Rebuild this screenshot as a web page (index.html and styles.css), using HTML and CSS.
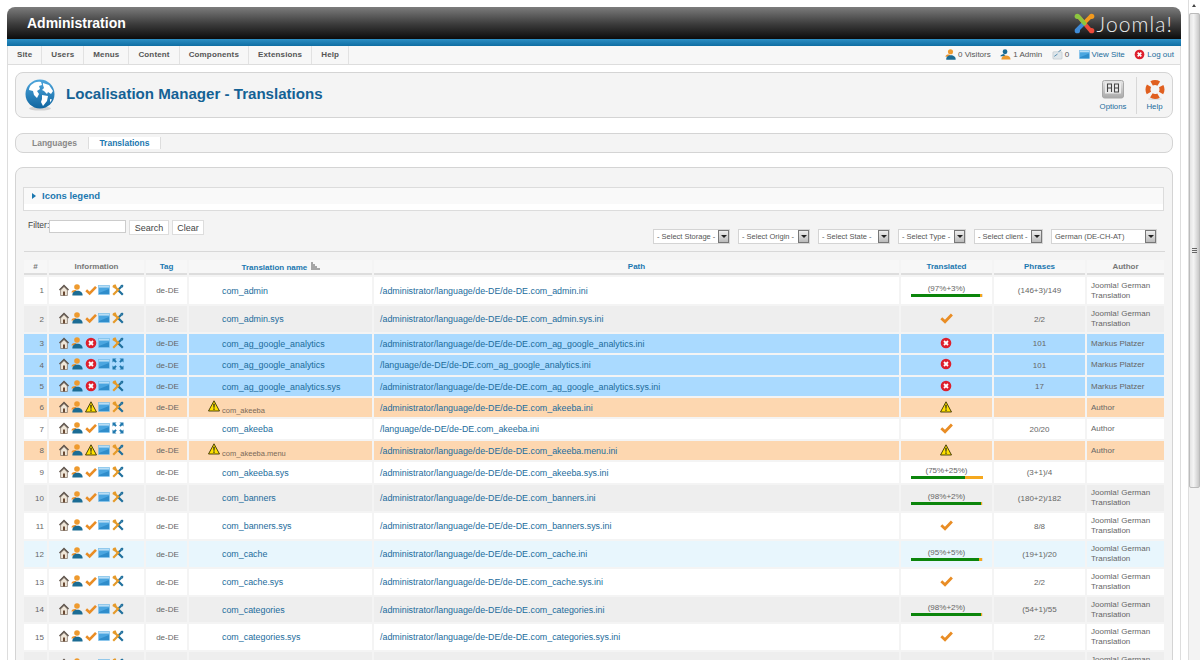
FILE: index.html
```html
<!DOCTYPE html>
<html lang="en">
<head>
<meta charset="utf-8">
<title>Localisation Manager - Translations</title>
<link rel="stylesheet" href="styles.css">
</head>
<body>
<svg class="defs" width="0" height="0" aria-hidden="true">
  <defs>
    <linearGradient id="g-globe" x1="0" y1="0" x2="0" y2="1"><stop offset="0" stop-color="#4ea6dd"/><stop offset="1" stop-color="#0f659f"/></linearGradient>
    <linearGradient id="g-opt" x1="0" y1="0" x2="0" y2="1"><stop offset="0" stop-color="#e6e6e6"/><stop offset="1" stop-color="#a9a9a9"/></linearGradient>
    <symbol id="i-house" viewBox="0 0 12 12">
      <path d="M2.600 6 6 2.600 9.400 6v5.500H2.600z" fill="#efe6d8" stroke="#7a6c5e" stroke-width=".7"/>
      <path d="M6 .6 1 5.600l.9.800L6 2.500l4.100 3.900.9-.8z" fill="#5c5148"/>
      <path d="M5 7.400h2v4.100H5z" fill="#6a4a34"/>
    </symbol>
    <symbol id="i-person" viewBox="0 0 12 12">
      <path d="M.4 8.400C.8 6.400 3 5.800 5 6.200l1 2.300z" fill="#e8902c"/>
      <circle cx="6" cy="3" r="2.800" fill="#ee9a2e"/>
      <path d="M1.400 11.600c-.4-3 2-4.800 5-4.800s5.500 1.800 5.200 4.800z" fill="#1b6c94"/>
    </symbol>
    <symbol id="i-admin" viewBox="0 0 12 12">
      <circle cx="5.500" cy="3" r="2.600" fill="#1b6c94"/>
      <path d="M.5 8c0-1.500 2-2.500 4-2.500L6 8z" fill="#1b6c94"/>
      <path d="M1.500 11.500c0-3 2-4.500 5-4.500s5 1.500 5 4.500z" fill="#ee9a2e"/>
    </symbol>
    <symbol id="i-check" viewBox="0 0 13 12">
      <path d="M1.300 6.300 5 9.800 11.900 2.500" fill="none" stroke="#e98d25" stroke-width="2.800"/>
    </symbol>
    <symbol id="i-window" viewBox="0 0 12 12">
      <rect x=".5" y="1.500" width="11" height="9" fill="#4ba6e0" stroke="#7dbfe9" stroke-width=".6"/>
      <path d="M.8 1.800h10.400v1.800H.8z" fill="#b9def5"/>
      <path d="M1 9 11 5v5H1z" fill="#2f8dcb"/>
    </symbol>
    <symbol id="i-tools" viewBox="0 0 12 12">
      <path d="M5.500 5.500 10.800 10.800" stroke="#1f6f9c" stroke-width="2.200"/>
      <path d="M5.800 5.800 3 3" stroke="#e59a2a" stroke-width="2.200"/>
      <path d="M.6 3.200C.3 1.400 1.800.2 3.800.6L4.600 3 3 4.500z" fill="#e59a2a"/>
      <path d="M1.200 10.800 7.500 4.500" stroke="#e59a2a" stroke-width="2.200"/>
      <path d="M7 5 9.500 2.500" stroke="#1f6f9c" stroke-width="2"/>
      <path d="M8.300 1.500 10.200.5 11.500 1.800 10.500 3.700z" fill="#1f6f9c"/>
    </symbol>
    <symbol id="i-expand" viewBox="0 0 12 12">
      <g fill="#1f78ae">
        <path d="M.5.500h4L3.200 1.800 4.800 3.400 3.400 4.800 1.800 3.200.5 4.500z"/>
        <path d="M11.500.500h-4l1.300 1.300L7.200 3.400l1.400 1.400 1.600-1.600 1.300 1.300z"/>
        <path d="M.5 11.500h4l-1.300-1.300 1.600-1.600-1.400-1.400-1.600 1.600L.5 7.500z"/>
        <path d="M11.500 11.500h-4l1.300-1.300-1.600-1.600 1.400-1.400 1.600 1.600 1.300-1.300z"/>
      </g>
    </symbol>
    <symbol id="i-error" viewBox="0 0 12 12">
      <circle cx="6" cy="6" r="5.300" fill="#dd1f2c"/>
      <path d="M4 4l4 4M8 4 4 8" stroke="#fff" stroke-width="1.800"/>
    </symbol>
    <symbol id="i-warn" viewBox="0 0 12 12">
      <path d="M6 .8 11.500 11H.5z" fill="#ffe100" stroke="#3a3300" stroke-width=".9" stroke-linejoin="round"/>
      <path d="M5.300 3.800h1.400l-.2 4h-1zM5.300 8.500h1.400v1.300H5.300z" fill="#222"/>
    </symbol>
  </defs>
</svg>

<div class="window">
  <div class="page">
    <header class="head">
      <span class="head-title">Administration</span>
      <span class="logo">
        <svg class="logo-mark" viewBox="0 0 22 22">
          <path d="M5 4 17 18" stroke="#ef4b3a" stroke-width="4.200" stroke-linecap="round"/>
          <path d="M4 17 10 11" stroke="#3f8bd6" stroke-width="4.200" stroke-linecap="round"/>
          <path d="M17 4 11 10" stroke="#f39a1d" stroke-width="4.200" stroke-linecap="round"/>
          <path d="M5 4 11 11" stroke="#8dc63f" stroke-width="4.200" stroke-linecap="round"/>
          <circle cx="3.500" cy="3.500" r="2.800" fill="#8dc63f"/>
          <circle cx="18.500" cy="3.500" r="2.800" fill="#f39a1d"/>
          <circle cx="3.500" cy="18.500" r="2.800" fill="#3f8bd6"/>
          <circle cx="18.500" cy="18.500" r="2.800" fill="#ef4b3a"/>
        </svg>
        <span class="logo-text">Joomla!</span>
      </span>
    </header>
    <div class="blue-bar"></div>
    <nav class="menu">
      <ul class="menu-list">
        <li class="menu-item">Site</li>
        <li class="menu-item">Users</li>
        <li class="menu-item">Menus</li>
        <li class="menu-item">Content</li>
        <li class="menu-item">Components</li>
        <li class="menu-item">Extensions</li>
        <li class="menu-item">Help</li>
      </ul>
      <div class="status">
        <span class="stat"><svg class="ic11"><use href="#i-person"/></svg>0 Visitors</span>
        <span class="stat"><svg class="ic11"><use href="#i-admin"/></svg>1 Admin</span>
        <span class="stat"><svg class="ic11" viewBox="0 0 12 12"><rect x="1" y="3" width="10" height="8" rx="1" fill="#dfe6ea" stroke="#b5bfc5" stroke-width=".6"/><path d="M2.500 8 6 5.500M7 3l3-2" stroke="#4a87ad" stroke-width="1"/></svg>0</span>
        <a class="stat stat-link"><svg class="ic11"><use href="#i-window"/></svg>View Site</a>
        <a class="stat stat-link"><svg class="ic11"><use href="#i-error"/></svg>Log out</a>
      </div>
    </nav>

    <main class="content">
      <section class="title-panel">
        <svg class="globe" viewBox="0 0 30 32">
          <ellipse cx="15" cy="29.500" rx="11" ry="2" fill="#d2d2d2"/>
          <circle cx="15" cy="15" r="14.500" fill="url(#g-globe)"/>
          <path d="M6 6c3-3 7-4 10-3l1 3-3 1 1 3-3 2 2 3-2 4-3-3-1-4-4-1c0-2 1-4 2-5z" fill="#fff"/>
          <path d="M18 4l6 2 4 6-2 3-3-2-1 2-3-3-2-1 2-2-1-3z" fill="#fff"/>
          <path d="M17 16l6 1-1 5-4 5-2-4 1-3z" fill="#fff"/>
          <path d="M25 20l2 .5-2 3z" fill="#fff"/>
        </svg>
        <h1 class="page-title">Localisation Manager - Translations</h1>
        <div class="toolbar">
          <a class="tool tool-options">
            <svg class="tool-icon" viewBox="0 0 22 20">
              <rect x=".5" y=".5" width="21" height="17.500" rx="2" fill="url(#g-opt)" stroke="#a8a8a8"/>
              <rect x="3" y="2.500" width="16" height="11" fill="#ececec"/>
              <path d="M5.500 12V4h4v8M5.500 8h4M12.500 4h4v8h-4zM12.500 8h4" fill="none" stroke="#444" stroke-width="1.100"/>
            </svg>
            <span>Options</span>
          </a>
          <a class="tool tool-help">
            <svg class="tool-icon" viewBox="0 0 22 20">
              <ellipse cx="11" cy="19" rx="7" ry="1" fill="#ddd"/>
              <circle cx="11" cy="9.500" r="7" fill="none" stroke="#e05f1f" stroke-width="5" stroke-dasharray="7.500 3.500" stroke-dashoffset="3.750"/>
            </svg>
            <span>Help</span>
          </a>
        </div>
      </section>

      <nav class="tabs">
        <a class="tab">Languages</a>
        <a class="tab tab-active">Translations</a>
      </nav>

      <section class="main-panel">
        <div class="legend">
          <span class="legend-arrow"></span>
          <span class="legend-title">Icons legend</span>
        </div>

        <div class="filters">
          <div class="filter-left">
            <label class="filter-label">Filter:</label>
            <span class="filter-input"></span>
            <button class="btn" type="button">Search</button>
            <button class="btn" type="button">Clear</button>
          </div>
          <div class="filter-right">
            <span class="sel sel-storage"><span class="sel-text">- Select Storage -</span><span class="sel-btn"></span></span>
            <span class="sel sel-origin"><span class="sel-text">- Select Origin -</span><span class="sel-btn"></span></span>
            <span class="sel sel-state"><span class="sel-text">- Select State -</span><span class="sel-btn"></span></span>
            <span class="sel sel-type"><span class="sel-text">- Select Type -</span><span class="sel-btn"></span></span>
            <span class="sel sel-client"><span class="sel-text">- Select client -</span><span class="sel-btn"></span></span>
            <span class="sel sel-lang"><span class="sel-text">German (DE-CH-AT)</span><span class="sel-btn"></span></span>
          </div>
        </div>

        <table class="grid">
          <colgroup>
            <col class="c-num"><col class="c-info"><col class="c-tag"><col class="c-name"><col class="c-path"><col class="c-trans"><col class="c-phr"><col class="c-auth">
          </colgroup>
          <thead>
            <tr>
              <th class="th-plain">#</th>
              <th class="th-plain">Information</th>
              <th>Tag</th>
              <th>Translation name
                <svg class="sort" viewBox="0 0 9 8"><path d="M0 1h2M0 3h4M0 5h6M0 7h9" stroke="#555" stroke-width="1"/></svg>
              </th>
              <th>Path</th>
              <th>Translated</th>
              <th>Phrases</th>
              <th class="th-plain">Author</th>
            </tr>
          </thead>
          <tbody>
            <tr class="h27 r-white">
              <td class="num">1</td>
              <td class="info"><svg class="ic"><use href="#i-house"/></svg><svg class="ic"><use href="#i-person"/></svg><svg class="ic"><use href="#i-check"/></svg><svg class="ic"><use href="#i-window"/></svg><svg class="ic"><use href="#i-tools"/></svg></td>
              <td class="tag">de-DE</td>
              <td class="name">com_admin</td>
              <td class="path">/administrator/language/de-DE/de-DE.com_admin.ini</td>
              <td class="trans"><div class="pct">(97%+3%)</div><div class="bar"><span class="bar-g" style="width:97%"></span><span class="bar-o" style="width:3%"></span></div></td>
              <td class="phr">(146+3)/149</td>
              <td class="auth">Joomla! German Translation</td>
            </tr>
            <tr class="h26 r-grey">
              <td class="num">2</td>
              <td class="info"><svg class="ic"><use href="#i-house"/></svg><svg class="ic"><use href="#i-person"/></svg><svg class="ic"><use href="#i-check"/></svg><svg class="ic"><use href="#i-window"/></svg><svg class="ic"><use href="#i-tools"/></svg></td>
              <td class="tag">de-DE</td>
              <td class="name">com_admin.sys</td>
              <td class="path">/administrator/language/de-DE/de-DE.com_admin.sys.ini</td>
              <td class="trans"><svg class="ic-big"><use href="#i-check"/></svg></td>
              <td class="phr">2/2</td>
              <td class="auth">Joomla! German Translation</td>
            </tr>
            <tr class="h19 r-blue">
              <td class="num">3</td>
              <td class="info"><svg class="ic"><use href="#i-house"/></svg><svg class="ic"><use href="#i-person"/></svg><svg class="ic"><use href="#i-error"/></svg><svg class="ic"><use href="#i-window"/></svg><svg class="ic"><use href="#i-tools"/></svg></td>
              <td class="tag">de-DE</td>
              <td class="name">com_ag_google_analytics</td>
              <td class="path">/administrator/language/de-DE/de-DE.com_ag_google_analytics.ini</td>
              <td class="trans"><svg class="ic"><use href="#i-error"/></svg></td>
              <td class="phr">101</td>
              <td class="auth">Markus Platzer</td>
            </tr>
            <tr class="h20 r-blue">
              <td class="num">4</td>
              <td class="info"><svg class="ic"><use href="#i-house"/></svg><svg class="ic"><use href="#i-person"/></svg><svg class="ic"><use href="#i-error"/></svg><svg class="ic"><use href="#i-window"/></svg><svg class="ic"><use href="#i-expand"/></svg></td>
              <td class="tag">de-DE</td>
              <td class="name">com_ag_google_analytics</td>
              <td class="path">/language/de-DE/de-DE.com_ag_google_analytics.ini</td>
              <td class="trans"><svg class="ic"><use href="#i-error"/></svg></td>
              <td class="phr">101</td>
              <td class="auth">Markus Platzer</td>
            </tr>
            <tr class="h19 r-blue">
              <td class="num">5</td>
              <td class="info"><svg class="ic"><use href="#i-house"/></svg><svg class="ic"><use href="#i-person"/></svg><svg class="ic"><use href="#i-error"/></svg><svg class="ic"><use href="#i-window"/></svg><svg class="ic"><use href="#i-tools"/></svg></td>
              <td class="tag">de-DE</td>
              <td class="name">com_ag_google_analytics.sys</td>
              <td class="path">/administrator/language/de-DE/de-DE.com_ag_google_analytics.sys.ini</td>
              <td class="trans"><svg class="ic"><use href="#i-error"/></svg></td>
              <td class="phr">17</td>
              <td class="auth">Markus Platzer</td>
            </tr>
            <tr class="h19 r-orange">
              <td class="num">6</td>
              <td class="info"><svg class="ic"><use href="#i-house"/></svg><svg class="ic"><use href="#i-person"/></svg><svg class="ic"><use href="#i-warn"/></svg><svg class="ic"><use href="#i-window"/></svg><svg class="ic"><use href="#i-tools"/></svg></td>
              <td class="tag">de-DE</td>
              <td class="name name-warn"><svg class="ic-warn"><use href="#i-warn"/></svg>com_akeeba</td>
              <td class="path">/administrator/language/de-DE/de-DE.com_akeeba.ini</td>
              <td class="trans"><svg class="ic"><use href="#i-warn"/></svg></td>
              <td class="phr"></td>
              <td class="auth">Author</td>
            </tr>
            <tr class="h20 r-white">
              <td class="num">7</td>
              <td class="info"><svg class="ic"><use href="#i-house"/></svg><svg class="ic"><use href="#i-person"/></svg><svg class="ic"><use href="#i-check"/></svg><svg class="ic"><use href="#i-window"/></svg><svg class="ic"><use href="#i-expand"/></svg></td>
              <td class="tag">de-DE</td>
              <td class="name">com_akeeba</td>
              <td class="path">/language/de-DE/de-DE.com_akeeba.ini</td>
              <td class="trans"><svg class="ic-big"><use href="#i-check"/></svg></td>
              <td class="phr">20/20</td>
              <td class="auth">Author</td>
            </tr>
            <tr class="h19 r-orange">
              <td class="num">8</td>
              <td class="info"><svg class="ic"><use href="#i-house"/></svg><svg class="ic"><use href="#i-person"/></svg><svg class="ic"><use href="#i-warn"/></svg><svg class="ic"><use href="#i-window"/></svg><svg class="ic"><use href="#i-tools"/></svg></td>
              <td class="tag">de-DE</td>
              <td class="name name-warn"><svg class="ic-warn"><use href="#i-warn"/></svg>com_akeeba.menu</td>
              <td class="path">/administrator/language/de-DE/de-DE.com_akeeba.menu.ini</td>
              <td class="trans"><svg class="ic"><use href="#i-warn"/></svg></td>
              <td class="phr"></td>
              <td class="auth">Author</td>
            </tr>
            <tr class="h21 r-white">
              <td class="num">9</td>
              <td class="info"><svg class="ic"><use href="#i-house"/></svg><svg class="ic"><use href="#i-person"/></svg><svg class="ic"><use href="#i-check"/></svg><svg class="ic"><use href="#i-window"/></svg><svg class="ic"><use href="#i-tools"/></svg></td>
              <td class="tag">de-DE</td>
              <td class="name">com_akeeba.sys</td>
              <td class="path">/administrator/language/de-DE/de-DE.com_akeeba.sys.ini</td>
              <td class="trans"><div class="pct">(75%+25%)</div><div class="bar"><span class="bar-g" style="width:75%"></span><span class="bar-o" style="width:25%"></span></div></td>
              <td class="phr">(3+1)/4</td>
              <td class="auth"></td>
            </tr>
            <tr class="h26 r-grey">
              <td class="num">10</td>
              <td class="info"><svg class="ic"><use href="#i-house"/></svg><svg class="ic"><use href="#i-person"/></svg><svg class="ic"><use href="#i-check"/></svg><svg class="ic"><use href="#i-window"/></svg><svg class="ic"><use href="#i-tools"/></svg></td>
              <td class="tag">de-DE</td>
              <td class="name">com_banners</td>
              <td class="path">/administrator/language/de-DE/de-DE.com_banners.ini</td>
              <td class="trans"><div class="pct">(98%+2%)</div><div class="bar"><span class="bar-g" style="width:98%"></span><span class="bar-o" style="width:2%"></span></div></td>
              <td class="phr">(180+2)/182</td>
              <td class="auth">Joomla! German Translation</td>
            </tr>
            <tr class="h26 r-white">
              <td class="num">11</td>
              <td class="info"><svg class="ic"><use href="#i-house"/></svg><svg class="ic"><use href="#i-person"/></svg><svg class="ic"><use href="#i-check"/></svg><svg class="ic"><use href="#i-window"/></svg><svg class="ic"><use href="#i-tools"/></svg></td>
              <td class="tag">de-DE</td>
              <td class="name">com_banners.sys</td>
              <td class="path">/administrator/language/de-DE/de-DE.com_banners.sys.ini</td>
              <td class="trans"><svg class="ic-big"><use href="#i-check"/></svg></td>
              <td class="phr">8/8</td>
              <td class="auth">Joomla! German Translation</td>
            </tr>
            <tr class="h26 r-hover">
              <td class="num">12</td>
              <td class="info"><svg class="ic"><use href="#i-house"/></svg><svg class="ic"><use href="#i-person"/></svg><svg class="ic"><use href="#i-check"/></svg><svg class="ic"><use href="#i-window"/></svg><svg class="ic"><use href="#i-tools"/></svg></td>
              <td class="tag">de-DE</td>
              <td class="name">com_cache</td>
              <td class="path">/administrator/language/de-DE/de-DE.com_cache.ini</td>
              <td class="trans"><div class="pct">(95%+5%)</div><div class="bar"><span class="bar-g" style="width:95%"></span><span class="bar-o" style="width:5%"></span></div></td>
              <td class="phr">(19+1)/20</td>
              <td class="auth">Joomla! German Translation</td>
            </tr>
            <tr class="h26 r-white">
              <td class="num">13</td>
              <td class="info"><svg class="ic"><use href="#i-house"/></svg><svg class="ic"><use href="#i-person"/></svg><svg class="ic"><use href="#i-check"/></svg><svg class="ic"><use href="#i-window"/></svg><svg class="ic"><use href="#i-tools"/></svg></td>
              <td class="tag">de-DE</td>
              <td class="name">com_cache.sys</td>
              <td class="path">/administrator/language/de-DE/de-DE.com_cache.sys.ini</td>
              <td class="trans"><svg class="ic-big"><use href="#i-check"/></svg></td>
              <td class="phr">2/2</td>
              <td class="auth">Joomla! German Translation</td>
            </tr>
            <tr class="h25 r-grey">
              <td class="num">14</td>
              <td class="info"><svg class="ic"><use href="#i-house"/></svg><svg class="ic"><use href="#i-person"/></svg><svg class="ic"><use href="#i-check"/></svg><svg class="ic"><use href="#i-window"/></svg><svg class="ic"><use href="#i-tools"/></svg></td>
              <td class="tag">de-DE</td>
              <td class="name">com_categories</td>
              <td class="path">/administrator/language/de-DE/de-DE.com_categories.ini</td>
              <td class="trans"><div class="pct">(98%+2%)</div><div class="bar"><span class="bar-g" style="width:98%"></span><span class="bar-o" style="width:2%"></span></div></td>
              <td class="phr">(54+1)/55</td>
              <td class="auth">Joomla! German Translation</td>
            </tr>
            <tr class="h26 r-white">
              <td class="num">15</td>
              <td class="info"><svg class="ic"><use href="#i-house"/></svg><svg class="ic"><use href="#i-person"/></svg><svg class="ic"><use href="#i-check"/></svg><svg class="ic"><use href="#i-window"/></svg><svg class="ic"><use href="#i-tools"/></svg></td>
              <td class="tag">de-DE</td>
              <td class="name">com_categories.sys</td>
              <td class="path">/administrator/language/de-DE/de-DE.com_categories.sys.ini</td>
              <td class="trans"><svg class="ic-big"><use href="#i-check"/></svg></td>
              <td class="phr">2/2</td>
              <td class="auth">Joomla! German Translation</td>
            </tr>
            <tr class="h26 r-grey">
              <td class="num"></td>
              <td class="info"><svg class="ic"><use href="#i-house"/></svg><svg class="ic"><use href="#i-person"/></svg><svg class="ic"><use href="#i-check"/></svg><svg class="ic"><use href="#i-window"/></svg><svg class="ic"><use href="#i-tools"/></svg></td>
              <td class="tag"></td>
              <td class="name"></td>
              <td class="path"></td>
              <td class="trans"></td>
              <td class="phr"></td>
              <td class="auth">Joomla! German Translation</td>
            </tr>
          </tbody>
        </table>
      </section>
    </main>
  </div>

  <aside class="scrollbar">
    <div class="sb-up"></div>
    <div class="sb-thumb"><span class="sb-grip"></span></div>
  </aside>
</div>
</body>
</html>
```
FILE: styles.css
```css
* { box-sizing: border-box; }
html, body { margin: 0; height: 660px; overflow: hidden; background: #fff; }
body { font-family: "Liberation Sans", Arial, sans-serif; font-size: 9px; color: #666; }
.defs { position: absolute; }
.window { display: flex; height: 660px; overflow: hidden; }
.page { flex: 0 0 1188px; width: 1188px; padding: 7px 7px 0; }

/* Header */
.head { height: 32px; display: flex; align-items: center; justify-content: space-between; padding: 0 8px 0 20px;
  background: linear-gradient(#7c7c7c, #3a3a3a 55%, #0c0c0c); border-radius: 8px 8px 0 0; }
.head-title { color: #fff; font-size: 14px; font-weight: bold; }
.logo { display: flex; align-items: center; gap: 2px; }
.logo-mark { width: 21px; height: 21px; }
.logo-text { font-family: Lato, "Liberation Sans", sans-serif; font-weight: 300; font-size: 21px; color: #ececec; letter-spacing: 1.100px; }
.blue-bar { height: 7px; background: linear-gradient(#2d8fc4, #0f6ea3); }

/* Menu */
.menu { height: 19px; display: flex; justify-content: space-between; align-items: stretch; background: #f7f7f7; border-bottom: 1px solid #ddd; border-left: 1px solid #ddd; border-right: 1px solid #ddd; }
.menu-list { list-style: none; display: flex; margin: 0; padding: 0; }
.menu-item { padding: 0 9px 1px; display: flex; align-items: center; border-right: 1px solid #e2e2e2; font-size: 8px; font-weight: bold; letter-spacing: .15px; color: #555; }
.status { display: flex; align-items: center; gap: 9.500px; padding-right: 6px; padding-bottom: 1px; font-size: 8px; color: #555; }
.stat { display: flex; align-items: center; gap: 2px; }
.stat-link { color: #1b6c9c; }
.ic11 { width: 11px; height: 11px; }

/* Content */
.content { height: 620px; padding: 7px 7px 0; border-left: 1px solid #ddd; border-right: 1px solid #ddd; }
.title-panel { height: 46px; display: flex; align-items: center; padding: 0 0 0 9px; background: #f4f4f4; border: 1px solid #d4d4d4; border-radius: 8px; }
.globe { width: 30px; height: 32px; margin-bottom: 1px; }
.page-title { margin: 0 0 3px 11px; font-size: 15.100px; font-weight: bold; color: #146295; flex: 1; }
.toolbar { display: flex; align-items: stretch; height: 37px; }
.tool { display: flex; flex-direction: column; align-items: center; padding-top: 3px; font-size: 7.800px; color: #1b6c9c; gap: 2px; }
.tool-options { width: 38px; margin-right: 4px; }
.tool-help { width: 36px; border-left: 1px solid #d8d8d8; }
.tool-icon { width: 22px; height: 20px; }

.tabs { margin-top: 15px; height: 20px; display: flex; align-items: center; padding-left: 6px; background: #f4f4f4; border: 1px solid #d4d4d4; border-radius: 8px; }
.tab { padding: 0 10px; line-height: 12px; font-size: 8.500px; font-weight: bold; color: #888; }
.tab-active { margin-left: 1px; padding: 0 10.500px; color: #1b78b0; background: #fff; border-left: 1px solid #ddd; border-right: 1px solid #ddd; }

.main-panel { margin-top: 14px; height: 600px; padding: 19px 6px 0; background: #f4f4f4; border: 1px solid #d4d4d4; border-radius: 8px 8px 0 0; }
.legend { height: 24px; margin-left: 1px; width: 1141px; padding: 0 0 7px 8px; display: flex; align-items: center; gap: 6px; background: linear-gradient(#f9f9f9 16px, #fff 16px); border: 1px solid #dcdcdc; }
.legend-arrow { width: 0; height: 0; border-left: 4px solid #1b78b0; border-top: 3px solid transparent; border-bottom: 3px solid transparent; }
.legend-title { font-size: 9.500px; font-weight: bold; color: #1b78b0; }

.filters { height: 41px; margin: 0 1px 0 2px; display: flex; justify-content: space-between; border-bottom: 1px solid #d8d8d8; padding: 9px 8px 7px 4px; }
.filter-left { display: flex; align-items: flex-start; }
.filter-label { font-size: 8.500px; color: #444; line-height: 11px; }
.filter-input { width: 77px; height: 13px; background: #fff; border: 1px solid #ccc; margin-right: 3px; }
.btn { height: 15px; padding: 0 4.500px; margin: 0 3px 0 0; font: 9px "Liberation Sans", Arial, sans-serif; color: #444; background: #fff; border: 1px solid #ddd; }
.filter-right { display: flex; align-items: flex-end; gap: 8px; }
.sel { display: flex; align-items: center; justify-content: space-between; height: 15px; background: #fff; border: 1px solid #d4d4d4; padding-left: 3px; font-size: 7.500px; color: #555; white-space: nowrap; }
.sel-storage { width: 77px; }
.sel-origin { width: 72px; }
.sel-state { width: 72px; }
.sel-type { width: 68px; }
.sel-client { width: 69px; }
.sel-lang { width: 106px; }
.sel-btn { position: relative; flex: none; width: 11px; height: 13px; background: linear-gradient(#eee, #bbb); border: 1px solid #777; }
.sel-btn::after { content: ""; position: absolute; left: 2px; top: 4px; border-top: 3px solid #222; border-left: 3px solid transparent; border-right: 3px solid transparent; }

/* Table */
.grid { table-layout: fixed; width: 1144px; margin-top: 6px; border-collapse: separate; border-spacing: 2px; }
.c-num { width: 23px; } .c-info { width: 95px; } .c-tag { width: 41px; } .c-name { width: 183px; }
.c-path { width: 525px; } .c-trans { width: 91px; } .c-phr { width: 91px; } .c-auth { width: 77px; }
.grid th { height: 15px; padding: 0; font-size: 8px; font-weight: bold; color: #1b78b0; text-align: center; background: #f7f7f7; border-bottom: 2px solid #ddd; }
.grid th.th-plain { color: #777; }
.sort { width: 9px; height: 8px; margin-left: 1px; }
.grid td { padding: 0; font-size: 8px; vertical-align: middle; color: #666; overflow: hidden; white-space: nowrap; }
.h19 td { height: 19px; } .h20 td { height: 20px; } .h21 td { height: 21px; } .h25 td { height: 25px; } .h26 td { height: 26px; } .h27 td { height: 27px; }
.r-white td { background: #fff; } .r-grey td { background: #eee; } .r-blue td { background: #aadaff; } .r-orange td { background: #fdd7b0; } .r-hover td { background: #e8f6fd; }
.grid td.num { text-align: right; padding-right: 3px; }
.grid td.info { padding: 0 0 2px 9px; font-size: 0; }
.ic { width: 12px; height: 12px; margin-right: 1.400px; }
.ic-big { width: 13px; height: 12px; }
.grid td.tag { text-align: center; padding-left: 2px; }
.grid td.name { padding-left: 33px; font-size: 8.900px; color: #1b6c9c; }
.grid td.name-warn { padding-left: 19px; font-size: 7.500px; color: #7a6a58; }
.ic-warn { width: 12px; height: 12px; margin-right: 2px; vertical-align: 1px; }
.grid td.path { padding-left: 6px; font-size: 8.900px; color: #1b6c9c; }
.grid td.trans { text-align: center; }
.pct { font-size: 8px; line-height: 9px; }
.bar { display: flex; width: 72px; height: 3px; margin: 1px auto 0; background: #ddd; }
.bar-g { background: #0b850b; }
.bar-o { background: #f5a81e; }
.grid td.phr { text-align: center; }
.grid td.auth { padding: 0 4px; line-height: 10px; white-space: normal; }

/* Scrollbar */
.scrollbar { flex: 0 0 12px; width: 12px; background: #f3f3f3; border-left: 1px solid #ddd; }
.sb-up { position: relative; height: 13px; background: #fff; }
.sb-up::after { content: ""; position: absolute; left: 3px; top: 4px; border-bottom: 3px solid #444; border-left: 2.500px solid transparent; border-right: 2.500px solid transparent; }
.sb-thumb { height: 475px; display: flex; align-items: center; justify-content: center; background: linear-gradient(90deg, #e4e4e4, #f4f4f4 40%, #c9c9c9); border: 1px solid #bbb; border-radius: 2px; }
.sb-grip { width: 5px; height: 5px; background: repeating-linear-gradient(#666 0 1px, transparent 1px 2px); }
```
